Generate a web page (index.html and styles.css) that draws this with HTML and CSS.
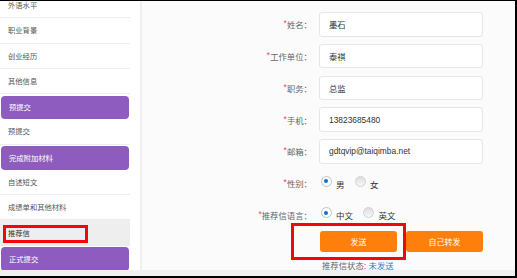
FILE: index.html
```html
<!DOCTYPE html>
<html lang="zh-CN">
<head>
    <meta charset="UTF-8">
    <meta name="viewport" content="width=device-width, initial-scale=1">
    <title>推荐信</title>
    <link rel="stylesheet" href="styles.css">
</head>
<body>
    <div class="frame">
        <div class="page">
            <aside class="sidebar">
                <ul class="menu">
                    <li class="plain">外语水平</li>
                    <li class="plain">职业背景</li>
                    <li class="plain">创业经历</li>
                    <li class="plain">其他信息</li>
                    <li class="step">预提交</li>
                    <li class="plain">预提交</li>
                    <li class="step">完成附加材料</li>
                    <li class="plain">自述短文</li>
                    <li class="plain">成绩单和其他材料</li>
                    <li class="current"><span class="mark-side"></span>推荐信</li>
                    <li class="step">正式提交</li>
                </ul>
            </aside>

            <main class="form">
                <div class="row">
                    <label class="label"><em>*</em>姓名：</label>
                    <input class="field" type="text" value="墨石">
                </div>
                <div class="row">
                    <label class="label"><em>*</em>工作单位：</label>
                    <input class="field" type="text" value="泰祺">
                </div>
                <div class="row">
                    <label class="label"><em>*</em>职务：</label>
                    <input class="field" type="text" value="总监">
                </div>
                <div class="row">
                    <label class="label"><em>*</em>手机：</label>
                    <input class="field" type="text" value="13823685480">
                </div>
                <div class="row">
                    <label class="label"><em>*</em>邮箱：</label>
                    <input class="field" type="text" value="gdtqvip@taiqimba.net">
                </div>
                <div class="row">
                    <label class="label"><em>*</em>性别：</label>
                    <div class="choices">
                        <span class="option"><i class="radio on"></i>男</span>
                        <span class="option"><i class="radio"></i>女</span>
                    </div>
                </div>
                <div class="row">
                    <label class="label"><em>*</em>推荐信语言：</label>
                    <div class="choices">
                        <span class="option"><i class="radio on"></i>中文</span>
                        <span class="option"><i class="radio"></i>英文</span>
                    </div>
                </div>
                <div class="actions">
                    <span class="mark"><button class="btn">发送</button></span>
                    <button class="btn">自己转发</button>
                </div>
                <p class="status">推荐信状态: <a href="#">未发送</a></p>
            </main>
        </div>
        <div class="band"></div>
    </div>
</body>
</html>
```

FILE: styles.css
```css
* {
    margin: 0;
    padding: 0;
    box-sizing: border-box;
}

html {
    font-family: "Liberation Sans", "Noto Sans CJK SC", sans-serif;
}

body {
    width: 517px;
    height: 278px;
    overflow: hidden;
    background-color: #fff;
}

.frame {
    display: flex;
    flex-direction: column;
    height: 278px;
    border-top: 1px solid #000;
    border-right: 2px solid #000;
    border-bottom: 2px solid #000;
}

.page {
    display: flex;
    height: 269px;
    overflow: hidden;
}

.band {
    height: 6px;
    background-color: #f0f0f0;
}

/* sidebar */

.sidebar {
    width: 142px;
    background-color: #fff;
    border-right: 2px solid #efefef;
    overflow: hidden;
}

.menu {
    list-style: none;
    margin-top: -8px;
}

.menu li {
    display: flex;
    align-items: center;
    width: 130px;
    height: 25.25px;
    padding-left: 8px;
    font-size: 7.3px;
    color: #555;
}

.menu .plain {
    border-bottom: 1px solid #ededed;
}

.menu .step {
    width: 128px;
    height: 23.75px;
    margin: 1.5px 1px 0;
    border-radius: 4px;
    background-color: #8e5cbf;
    color: #fff;
}

.menu .current {
    position: relative;
    background-color: #eee;
    color: #333;
}

.mark-side {
    position: absolute;
    left: 3px;
    top: 5px;
    width: 85px;
    height: 18px;
    border: 3px solid #ee0a0a;
}

/* form */

.form {
    flex: 1;
    padding-top: 11px;
    background-color: #fbfbfb;
}

.row {
    display: flex;
    align-items: center;
    height: 24.5px;
    margin-bottom: 7.25px;
}

.label {
    display: flex;
    justify-content: flex-end;
    width: 170px;
    margin-right: 7px;
    font-size: 8.4px;
    color: #666;
}

.label em {
    font-style: normal;
    color: #e8474a;
}

.field {
    width: 164px;
    height: 24.5px;
    padding-left: 9px;
    border: 1px solid #e6e6e6;
    border-radius: 3px;
    background-color: #fff;
    font-family: inherit;
    font-size: 8.4px;
    color: #333;
    outline: none;
}

.choices {
    display: flex;
    margin-left: 1.5px;
    gap: 10px;
}

.option {
    display: flex;
    align-items: flex-end;
    gap: 4.5px;
    font-size: 8.5px;
    color: #333;
    line-height: 12px;
}

.radio {
    position: relative;
    width: 11px;
    height: 11px;
    margin-bottom: 4px;
    border: 1px solid #d2d2d2;
    border-radius: 50%;
    background: linear-gradient(#dedede, #f7f7f7);
}

.radio.on {
    border-color: #c4c4c4;
    background: radial-gradient(circle, #fff 55%, #e6e6e6 100%);
}

.radio.on::after {
    content: "";
    position: absolute;
    left: 2.5px;
    top: 2.5px;
    width: 4px;
    height: 4px;
    border-radius: 50%;
    background-color: #0b6fd6;
}

.actions {
    display: flex;
    gap: 9px;
    margin-top: -3.25px;
    padding-left: 178px;
}

.btn {
    width: 77px;
    height: 21px;
    border: none;
    border-radius: 3px;
    background-color: #ff7f0c;
    color: #fff;
    font-family: inherit;
    font-size: 8px;
}

.mark {
    position: relative;
    display: flex;
}

.mark::after {
    content: "";
    position: absolute;
    top: -8px;
    right: -9px;
    bottom: -8px;
    left: -29px;
    border: 3px solid #ee0a0a;
}

.status {
    margin-top: 8px;
    padding-left: 180px;
    font-size: 8.4px;
    line-height: 12px;
    color: #666;
}

.status a {
    color: #2d7bd2;
    text-decoration: none;
}
```
